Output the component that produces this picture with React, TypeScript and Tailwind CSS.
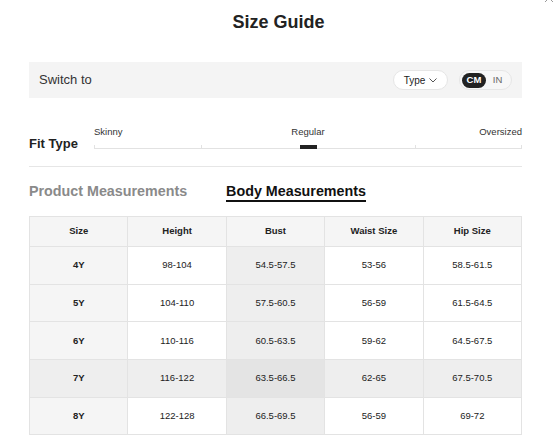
import React from 'react';

type Row = { size: string; height: string; bust: string; waist: string; hip: string };

const rows: Row[] = [
  { size: '4Y', height: '98-104', bust: '54.5-57.5', waist: '53-56', hip: '58.5-61.5' },
  { size: '5Y', height: '104-110', bust: '57.5-60.5', waist: '56-59', hip: '61.5-64.5' },
  { size: '6Y', height: '110-116', bust: '60.5-63.5', waist: '59-62', hip: '64.5-67.5' },
  { size: '7Y', height: '116-122', bust: '63.5-66.5', waist: '62-65', hip: '67.5-70.5' },
  { size: '8Y', height: '122-128', bust: '66.5-69.5', waist: '56-59', hip: '69-72' },
];

// highlighted row / column in the chart
const activeRow = '7Y';

const cellBase = 'border border-[#e3e3e3] text-center align-middle';

export default function App() {
  return (
    <div className="relative w-[557px] h-[438px] overflow-hidden bg-white font-['Liberation_Sans',Arial,sans-serif] text-[#222]">
      {/* close button, mostly scrolled out of view */}
      <svg className="absolute left-[543px] top-[-8px]" width="12" height="12" viewBox="0 0 12 12">
        <path d="M2 2l8 8M10 2l-8 8" stroke="#9a9a9a" strokeWidth="1" />
      </svg>

      {/* Header */}
      <h1 className="pt-[12px] text-center text-[18px] leading-[20px] font-bold text-[#222]">Size Guide</h1>

      <div className="ml-[29px] w-[493px]">
        {/* Unit switcher */}
        <div className="mt-[30px] flex h-[36px] items-center justify-between bg-[#f4f4f4] pl-[10px] pr-[10px]">
          <span className="text-[13px] text-[#333]">Switch to</span>
          <div className="flex items-center gap-[11px]">
            <button className="flex h-[20px] w-[55px] items-center justify-center gap-[4px] rounded-full border border-[#e6e6e6] bg-white text-[10px] text-[#222]">
              Type
              <svg width="8" height="5" viewBox="0 0 8 5">
                <path d="M0.5 0.5L4 4l3.5-3.5" fill="none" stroke="#444" strokeWidth="0.9" />
              </svg>
            </button>
            <div className="flex h-[20px] w-[53px] items-center rounded-full border border-[#e6e6e6] bg-[#f7f7f7] px-[2px]">
              <span className="flex h-[15px] w-[24px] items-center justify-center rounded-full bg-[#222] text-[9.5px] font-bold text-white">CM</span>
              <span className="flex flex-1 items-center justify-center text-[9.5px] text-[#666]">IN</span>
            </div>
          </div>
        </div>

        {/* Fit type */}
        <div className="mt-[28px] flex items-end">
          <span className="w-[65px] text-[13px] leading-[11px] font-bold text-[#222]">Fit Type</span>
          <div className="flex-1">
            <div className="grid h-[12px] grid-cols-3 items-center text-[9.5px] leading-[12px] text-[#333]">
              <span className="text-left">Skinny</span>
              <span className="text-center">Regular</span>
              <span className="text-right">Oversized</span>
            </div>
            <div className="relative h-[11px]">
              <div className="absolute bottom-0 left-0 h-px w-full bg-[#e2e2e2]" />
              <div className="absolute bottom-0 left-0 h-[4px] w-px bg-[#e2e2e2]" />
              <div className="absolute bottom-0 left-[25%] h-[4px] w-px bg-[#e2e2e2]" />
              <div className="absolute bottom-0 left-[75%] h-[4px] w-px bg-[#e2e2e2]" />
              <div className="absolute bottom-0 right-0 h-[4px] w-px bg-[#e2e2e2]" />
              <div className="absolute bottom-0 left-[calc(50%-8px)] h-[4px] w-[17px] bg-[#222]" />
            </div>
          </div>
        </div>

        <div className="mt-[17px] h-px bg-[#e6e6e6]" />

        {/* Tabs */}
        <div className="mt-[15px] flex gap-[39px] text-[14.3px] font-bold leading-[18px]">
          <span className="pb-[2px] text-[#8a8a8a]">Product Measurements</span>
          <span className="border-b-2 border-[#111] text-[#111]">Body Measurements</span>
        </div>

        {/* Chart */}
        <table className="mt-[14px] w-full table-fixed border-collapse text-[9.5px]">
          <thead>
            <tr className="h-[30px] bg-[#f5f5f5] font-bold">
              <th className={cellBase}>Size</th>
              <th className={cellBase}>Height</th>
              <th className={cellBase}>Bust</th>
              <th className={cellBase}>Waist Size</th>
              <th className={cellBase}>Hip Size</th>
            </tr>
          </thead>
          <tbody>
            {rows.map((r) => {
              const hot = r.size === activeRow;
              return (
                <tr key={r.size} className={`h-[37.7px] ${hot ? 'bg-[#eeeeee]' : 'bg-white'}`}>
                  <td className={`${cellBase} font-bold ${hot ? 'bg-[#eeeeee]' : 'bg-[#f5f5f5]'}`}>{r.size}</td>
                  <td className={cellBase}>{r.height}</td>
                  <td className={`${cellBase} ${hot ? 'bg-[#e4e4e4]' : 'bg-[#eeeeee]'}`}>{r.bust}</td>
                  <td className={cellBase}>{r.waist}</td>
                  <td className={cellBase}>{r.hip}</td>
                </tr>
              );
            })}
          </tbody>
        </table>
      </div>
    </div>
  );
}
